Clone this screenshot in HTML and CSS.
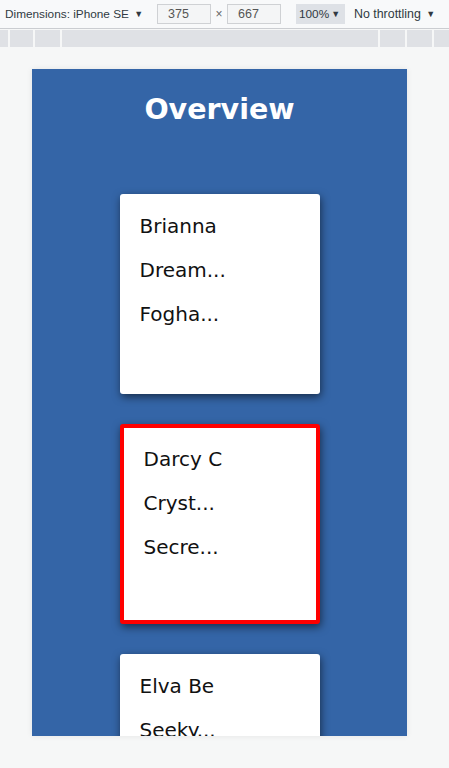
FILE: index.html
```html
<!DOCTYPE html>
<html lang="en">
<head>
<meta charset="utf-8">
<title>Overview</title>
<link rel="stylesheet" href="styles.css">
</head>
<body>
<div class="toolbar">
  <span class="dim">Dimensions: iPhone SE <span class="caret">▼</span></span>
  <span class="box">375</span>
  <span class="times">×</span>
  <span class="box">667</span>
  <span class="zoom">100% <span class="caret">▼</span></span>
  <span class="throttle">No throttling <span class="caret">▼</span></span>
</div>
<div class="ruler">
  <span class="seg s1"></span>
  <span class="seg s2"></span>
  <span class="seg s3"></span>
  <span class="seg grow"></span>
  <span class="seg s4"></span>
  <span class="seg s5"></span>
  <span class="seg s6"></span>
</div>
<div class="stage">
  <div class="viewport">
    <h1 class="title">Overview</h1>
    <div class="cards">
      <div class="card">
        <div class="line">Brianna</div>
        <div class="line">Dream...</div>
        <div class="line">Fogha...</div>
      </div>
      <div class="card selected">
        <div class="line">Darcy C</div>
        <div class="line">Cryst...</div>
        <div class="line">Secre...</div>
      </div>
      <div class="card">
        <div class="line">Elva Be</div>
        <div class="line">Seeky...</div>
      </div>
    </div>
  </div>
</div>
</body>
</html>
```
FILE: styles.css
```css
* { box-sizing: border-box; }
html, body { margin: 0; padding: 0; }
body {
  width: 449px;
  height: 768px;
  overflow: hidden;
  background: #f6f7f7;
  font-family: "DejaVu Sans", sans-serif;
}
.toolbar {
  height: 29px;
  background: #f8f9fa;
  border-bottom: 1px solid #cbcdd1;
  display: flex;
  align-items: center;
  padding-left: 5px;
  font-family: "Liberation Sans", sans-serif;
  font-size: 11.8px;
  color: #303942;
  white-space: nowrap;
}
.caret { font-size: 9px; margin-left: 2px; vertical-align: 1px; }
.dim { width: 152px; }
.box {
  width: 54px;
  height: 20px;
  border: 1px solid #cfd1d4;
  background: #f4f5f6;
  color: #555;
  display: flex;
  align-items: center;
  padding-left: 10px;
  font-size: 12.5px;
}
.times { width: 16px; text-align: center; color: #666; font-size: 12px; }
.zoom {
  margin-left: 15px;
  width: 49px;
  height: 20px;
  background: #dee1e6;
  display: flex;
  align-items: center;
  padding-left: 3px;
}
.throttle { margin-left: 9px; font-size: 12.4px; }
.ruler {
  height: 17px;
  margin-top: 1px;
  display: flex;
  gap: 2px;
}
.seg { background: #dfe1e5; height: 100%; }
.s1 { width: 8px; }
.s2 { width: 23px; }
.s3 { width: 25px; }
.grow { flex: 1; }
.s4 { width: 25px; }
.s5 { width: 25px; }
.s6 { width: 15px; }
.stage {
  padding: 22px 0 0 32px;
}
.viewport {
  width: 375px;
  height: 667px;
  background: #3465a7;
  overflow: hidden;
  box-shadow: 0 0 6px rgba(0,0,0,0.08);
}
.title {
  margin: 0;
  padding-top: 23px;
  height: 125px;
  text-align: center;
  color: #fff;
  font-size: 28.5px;
  font-weight: bold;
  line-height: 36px;
}
.cards {
  display: flex;
  flex-direction: column;
  align-items: center;
  gap: 30px;
}
.card {
  width: 200px;
  height: 200px;
  flex-shrink: 0;
  background: #fff;
  border-radius: 3px;
  padding: 20px 20px;
  box-shadow: 1px 3px 8px rgba(0,0,0,0.55);
  color: #111;
  font-size: 20px;
}
.card.selected {
  border: 4px solid #ff0000;
  padding: 19px 20px;
}
.line {
  line-height: 24px;
  margin-bottom: 20px;
}
```
